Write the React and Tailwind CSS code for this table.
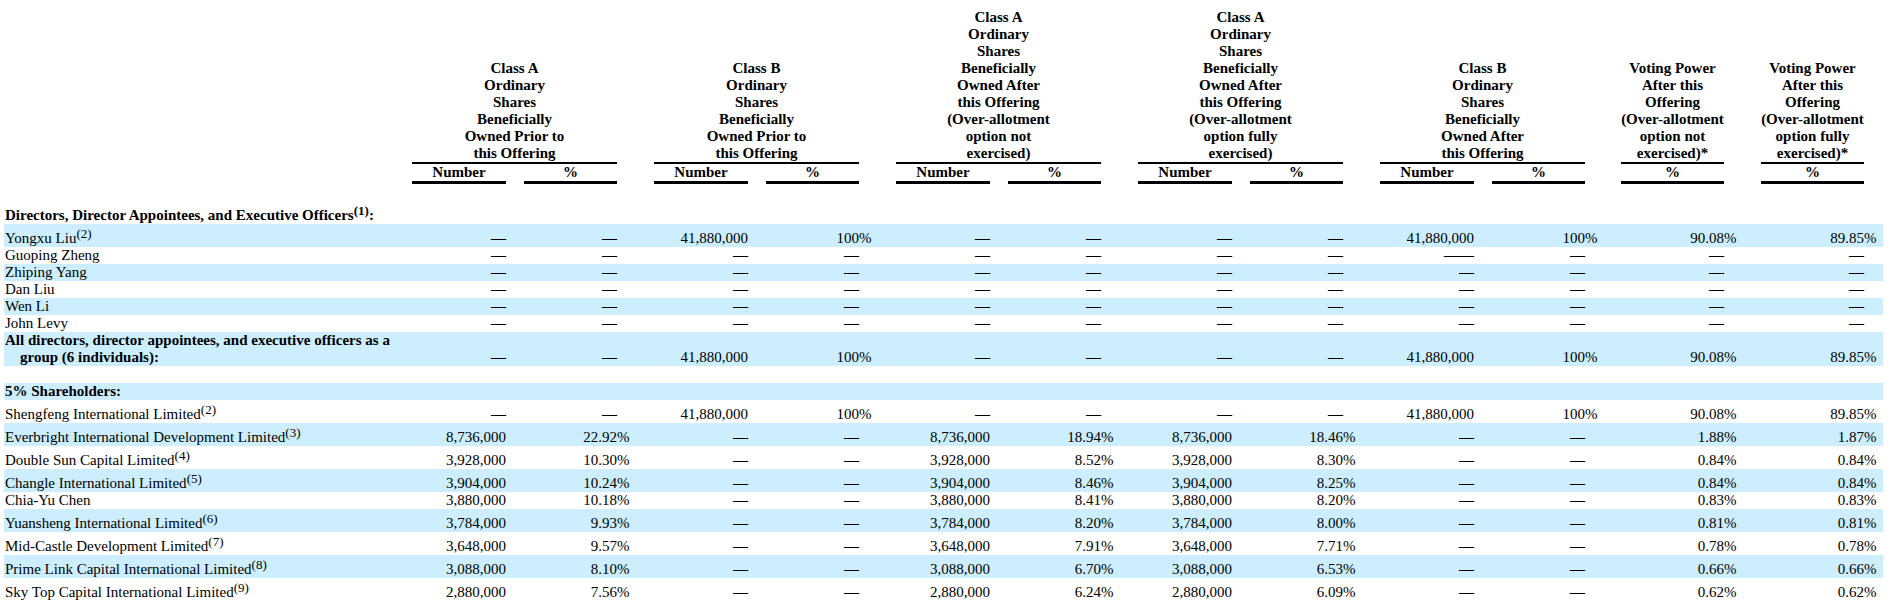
import React from 'react'

const D = '—'

const groups = [
  { lines: ['Class A', 'Ordinary', 'Shares', 'Beneficially', 'Owned Prior to', 'this Offering'], sub: true },
  { lines: ['Class B', 'Ordinary', 'Shares', 'Beneficially', 'Owned Prior to', 'this Offering'], sub: true },
  { lines: ['Class A', 'Ordinary', 'Shares', 'Beneficially', 'Owned After', 'this Offering', '(Over-allotment', 'option not', 'exercised)'], sub: true },
  { lines: ['Class A', 'Ordinary', 'Shares', 'Beneficially', 'Owned After', 'this Offering', '(Over-allotment', 'option fully', 'exercised)'], sub: true },
  { lines: ['Class B', 'Ordinary', 'Shares', 'Beneficially', 'Owned After', 'this Offering'], sub: true },
  { lines: ['Voting Power', 'After this', 'Offering', '(Over-allotment', 'option not', 'exercised)*'], sub: false },
  { lines: ['Voting Power', 'After this', 'Offering', '(Over-allotment', 'option fully', 'exercised)*'], sub: false },
]

const groupMargin = ['', 'ml-[37px]', 'ml-[37px]', 'ml-[37px]', 'ml-[37px]', 'ml-[36px]', 'ml-[37px]']

// values: [a1n, a1p, b1n, b1p, a2n, a2p, a3n, a3p, b2n, b2p, v1, v2]
const allDash = [D, D, D, D, D, D, D, D, D, D, D, D]
const bOnly = [D, D, '41,880,000', '100', D, D, D, D, '41,880,000', '100', '90.08', '89.85']

const rows = [
  { label: 'Directors, Director Appointees, and Executive Officers', note: '1', colon: true, bold: true, h: 'h-[23px]' },
  { label: 'Yongxu Liu', note: '2', blue: true, h: 'h-[23px]', v: bOnly },
  { label: 'Guoping Zheng', h: 'h-[17px]', v: [D, D, D, D, D, D, D, D, D + D, D, D, D] },
  { label: 'Zhiping Yang', blue: true, h: 'h-[17px]', v: allDash },
  { label: 'Dan Liu', h: 'h-[17px]', v: allDash },
  { label: 'Wen Li', blue: true, h: 'h-[17px]', v: allDash },
  { label: 'John Levy', h: 'h-[17px]', v: allDash },
  { label: 'All directors, director appointees, and executive officers as a', label2: 'group (6 individuals):', bold: true, blue: true, h: 'h-[34px]', v: bOnly },
  { label: '', h: 'h-[17px]' },
  { label: '5% Shareholders:', bold: true, blue: true, h: 'h-[17px]' },
  { label: 'Shengfeng International Limited', note: '2', h: 'h-[23px]', v: bOnly },
  { label: 'Everbright International Development Limited', note: '3', blue: true, h: 'h-[23px]', v: ['8,736,000', '22.92', D, D, '8,736,000', '18.94', '8,736,000', '18.46', D, D, '1.88', '1.87'] },
  { label: 'Double Sun Capital Limited', note: '4', h: 'h-[23px]', v: ['3,928,000', '10.30', D, D, '3,928,000', '8.52', '3,928,000', '8.30', D, D, '0.84', '0.84'] },
  { label: 'Changle International Limited', note: '5', blue: true, h: 'h-[23px]', v: ['3,904,000', '10.24', D, D, '3,904,000', '8.46', '3,904,000', '8.25', D, D, '0.84', '0.84'] },
  { label: 'Chia-Yu Chen', h: 'h-[17px]', v: ['3,880,000', '10.18', D, D, '3,880,000', '8.41', '3,880,000', '8.20', D, D, '0.83', '0.83'] },
  { label: 'Yuansheng International Limited', note: '6', blue: true, h: 'h-[23px]', v: ['3,784,000', '9.93', D, D, '3,784,000', '8.20', '3,784,000', '8.00', D, D, '0.81', '0.81'] },
  { label: 'Mid-Castle Development Limited', note: '7', h: 'h-[23px]', v: ['3,648,000', '9.57', D, D, '3,648,000', '7.91', '3,648,000', '7.71', D, D, '0.78', '0.78'] },
  { label: 'Prime Link Capital International Limited', note: '8', blue: true, h: 'h-[23px]', v: ['3,088,000', '8.10', D, D, '3,088,000', '6.70', '3,088,000', '6.53', D, D, '0.66', '0.66'] },
  { label: 'Sky Top Capital International Limited', note: '9', h: 'h-[23px]', v: ['2,880,000', '7.56', D, D, '2,880,000', '6.24', '2,880,000', '6.09', D, D, '0.62', '0.62'] },
]

const isDash = (value) => value && value[0] === D

const Num = ({ value, className = '' }) => (
  <div className={`w-[94px] text-right ${isDash(value) ? 'font-bold' : ''} ${className}`}>{value}</div>
)

const Pct = ({ value, wide, className = '' }) => (
  <div className={`flex ${className}`}>
    <div className={`${wide ? 'w-[103px]' : 'w-[93px]'} text-right ${isDash(value) ? 'font-bold' : ''}`}>{value}</div>
    <div className="w-[12px]">{value && !isDash(value) ? '%' : ''}</div>
  </div>
)

const Values = ({ v }) => {
  if (!v) return null
  return (
    <>
      <Num value={v[0]} />
      <Pct value={v[1]} className="ml-[18px]" />
      <Num value={v[2]} className="ml-[25px]" />
      <Pct value={v[3]} className="ml-[18px]" />
      <Num value={v[4]} className="ml-[25px]" />
      <Pct value={v[5]} className="ml-[18px]" />
      <Num value={v[6]} className="ml-[25px]" />
      <Pct value={v[7]} className="ml-[18px]" />
      <Num value={v[8]} className="ml-[25px]" />
      <Pct value={v[9]} className="ml-[18px]" />
      <Pct value={v[10]} wide className="ml-[24px]" />
      <Pct value={v[11]} wide className="ml-[25px]" />
    </>
  )
}

const Note = ({ n }) => (
  <sup className="text-[13px] -top-[5px]">({n})</sup>
)

const HeaderGroup = ({ g, className }) => (
  <div className={`flex flex-col justify-end ${g.sub ? 'w-[205px]' : 'w-[103px]'} ${className}`}>
    <div className="text-center">
      {g.lines.map((l) => (
        <div key={l}>{l}</div>
      ))}
    </div>
    <div className="border-t-2 border-black flex">
      {g.sub ? (
        <>
          <div className="w-[94px] text-center border-b-[3px] border-black">Number</div>
          <div className="w-[93px] ml-[18px] text-center border-b-[3px] border-black">%</div>
        </>
      ) : (
        <div className="w-[103px] text-center border-b-[3px] border-black">%</div>
      )}
    </div>
  </div>
)

export default function App() {
  return (
    <div className="bg-white w-[1890px] h-[616px] font-['Liberation_Serif','Times_New_Roman',serif] text-[15px] leading-[17px] text-black">
      <div className="ml-[4px] w-[1879px] pt-[9px] flex font-bold">
        <div className="w-[408px]" />
        {groups.map((g, i) => (
          <HeaderGroup key={i} g={g} className={groupMargin[i]} />
        ))}
      </div>
      <div className="h-[17px]" />
      <div className="ml-[4px] w-[1879px]">
        {rows.map((r, i) => (
          <div key={i} className={`flex items-end ${r.h} ${r.blue ? 'bg-[#cceeff]' : ''}`}>
            <div className={`w-[408px] pl-[1px] ${r.bold ? 'font-bold' : ''}`}>
              {r.label}
              {r.note && <Note n={r.note} />}
              {r.colon && ':'}
              {r.label2 && (
                <>
                  <br />
                  <span className="pl-[15px]">{r.label2}</span>
                </>
              )}
            </div>
            <Values v={r.v} />
          </div>
        ))}
      </div>
    </div>
  )
}
